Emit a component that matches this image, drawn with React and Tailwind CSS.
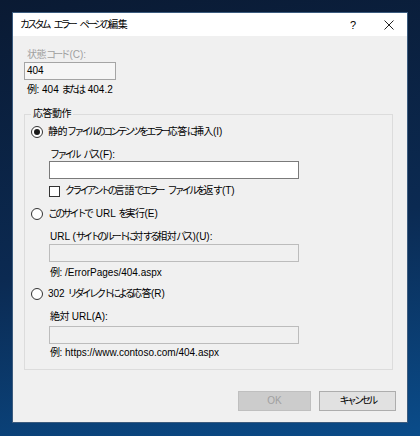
const font = { fontFamily: '"Liberation Sans", "Noto Sans CJK JP", sans-serif' }

// the CJK font here has no proportional kana, so Japanese runs get tighter spacing
function T({ children }) {
  const parts = String(children).split(/([\u3040-\u30ff]+|[\u4e00-\u9fff]+)/)
  return parts.map((p, i) => {
    if (!(i % 2)) return p
    const kana = /[\u3040-\u30ff]/.test(p[0])
    if (!kana) {
      return (
        <span key={i} className="tracking-[-0.5px]">
          {p}
        </span>
      )
    }
    // keep a little room before a following space or latin text
    const loose = parts[i + 1] !== ''
    return (
      <span key={i} className="tracking-[-2.8px]">
        {loose ? p.slice(0, -1) : p}
        {loose && <span className="tracking-[-1px]">{p.slice(-1)}</span>}
      </span>
    )
  })
}

function Radio({ checked }) {
  return (
    <span className="flex h-[12px] w-[12px] shrink-0 items-center justify-center rounded-full border border-[#333] bg-white">
      {checked && <span className="h-[6px] w-[6px] rounded-full bg-[#1a1a1a]" />}
    </span>
  )
}

function Field({ disabled }) {
  return (
    <div
      className={
        'ml-[24px] h-[18px] w-[250px] border ' +
        (disabled ? 'border-[#bcbcbc] bg-[#f0f0f0]' : 'border-[#7a7a7a] bg-white')
      }
    />
  )
}

export default function App() {
  return (
    <div
      className="h-[436px] w-[420px] overflow-hidden bg-[linear-gradient(170deg,#0a1a33_0%,#0b2a52_55%,#0a4c8a_100%)] pl-[12px] pt-[12px] text-[10px] text-black"
      style={font}
    >
      <div className="flex h-[411px] w-[396px] flex-col border border-[#3b5b7e] bg-[#f0f0f0]">
        {/* title bar */}
        <div className="flex h-[23px] items-center bg-white pl-[7px]">
          <span className="flex-1 leading-[14px]"><T>カスタム エラー ページの編集</T></span>
          <span className="w-[14px] text-center text-[11px] leading-[14px]">?</span>
          <span className="ml-[22px] mr-[11px] flex w-[14px] justify-center">
            <svg width="10" height="10" viewBox="0 0 10 10" stroke="#222" strokeWidth="1">
              <path d="M0.5 0.5 L9.5 9.5 M9.5 0.5 L0.5 9.5" />
            </svg>
          </span>
        </div>

        <div className="flex flex-1 flex-col px-[11px] pt-[12px]">
          <div className="h-[14px] pl-[3px] leading-[14px] text-[#a0a0a0]"><T>状態コード(C):</T></div>
          <div className="flex h-[18px] w-[92px] items-center border border-[#a5a5a5] bg-[#f6f6f6] pl-[2px] leading-[14px]">
            404
          </div>
          <div className="mt-[3px] h-[14px] pl-[3px] leading-[14px]"><T>例: 404 または 404.2</T></div>

          <div className="relative mt-[17px] h-[256px] w-[369px] border border-[#dcdcdc] pl-[6px]">
            <span className="absolute -top-[8px] left-[6px] bg-[#f0f0f0] px-[2px] leading-[14px]"><T>応答動作</T></span>

            <div className="mt-[10px] flex h-[14px] items-center gap-[5px] leading-[14px]">
              <Radio checked />
              <span><T>静的ファイルのコンテンツをエラー応答に挿入(I)</T></span>
            </div>
            <div className="mt-[9px] h-[13px] pl-[19px] leading-[13px]"><T>ファイル パス(F):</T></div>
            <div className="-ml-[6px]">
              <Field />
            </div>
            <div className="mt-[5px] flex h-[14px] items-center gap-[5px] pl-[18px] leading-[14px]">
              <span className="h-[11px] w-[11px] border border-[#333] bg-white" />
              <span><T>クライアントの言語でエラー ファイルを返す(T)</T></span>
            </div>

            <div className="mt-[9px] flex h-[14px] items-center gap-[5px] leading-[14px]">
              <Radio />
              <span><T>このサイトで URL を実行(E)</T></span>
            </div>
            <div className="mt-[9px] h-[13px] pl-[19px] leading-[13px]"><T>URL (サイトのルートに対する相対パス)(U):</T></div>
            <div className="-ml-[6px] mt-[1px]">
              <Field disabled />
            </div>
            <div className="mt-[4px] h-[14px] pl-[19px] leading-[14px]"><T>例: /ErrorPages/404.aspx</T></div>

            <div className="mt-[7px] flex h-[14px] items-center gap-[5px] leading-[14px]">
              <Radio />
              <span><T>302 リダイレクトによる応答(R)</T></span>
            </div>
            <div className="mt-[9px] h-[13px] pl-[19px] leading-[13px]"><T>絶対 URL(A):</T></div>
            <div className="-ml-[6px] mt-[3px]">
              <Field disabled />
            </div>
            <div className="mt-[2px] h-[14px] pl-[19px] leading-[14px]"><T>例: https://www.contoso.com/404.aspx</T></div>
          </div>

          <div className="mt-[21px] flex justify-end gap-[8px]">
            <div className="flex h-[20px] w-[73px] items-center justify-center border border-[#bfbfbf] bg-[#cccccc] leading-[14px] text-[#a0a0a0]">
              OK
            </div>
            <div className="flex h-[20px] w-[77px] items-center justify-center border border-[#adadad] bg-[#e1e1e1] leading-[14px]">
              <T>キャンセル</T>
            </div>
          </div>
        </div>
      </div>
    </div>
  )
}
